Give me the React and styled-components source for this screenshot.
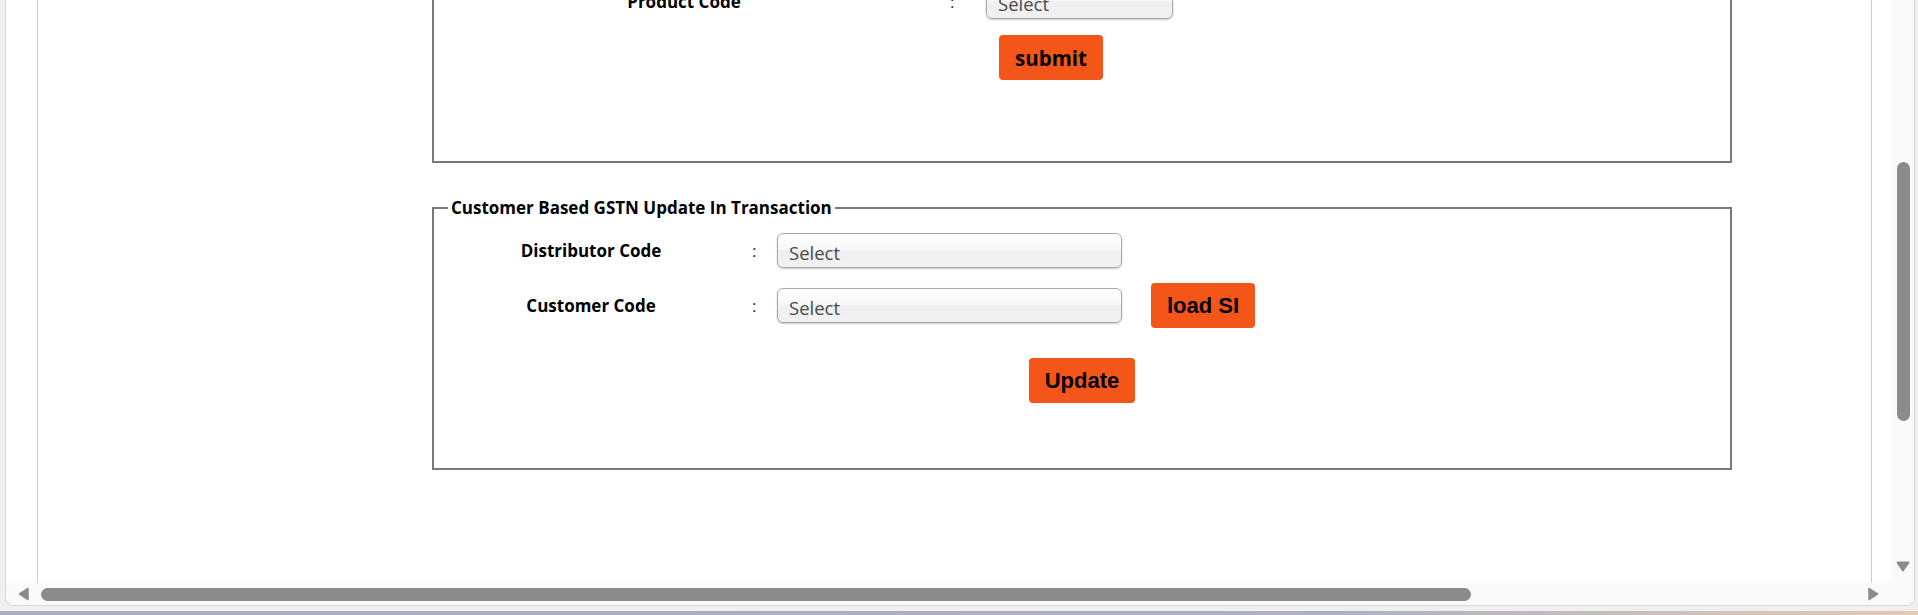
import React from 'react';
import styled, { createGlobalStyle } from 'styled-components';

const GlobalStyle = createGlobalStyle`
  html, body {
    margin: 0;
    padding: 0;
  }
  body {
    background: #f0f0f0;
    font-family: "Open Sans", "Liberation Sans", sans-serif;
    overflow: hidden;
  }
`;

const Screen = styled.div`
  width: 1918px;
  height: 615px;
  display: flex;
  flex-direction: column;
  overflow: hidden;
`;

const Window = styled.div`
  margin: 0 3px 0 5px;
  height: 606px;
  flex: none;
  box-sizing: border-box;
  display: grid;
  grid-template-columns: 1fr 22px;
  grid-template-rows: 583px 1fr;
  background: #fafafa;
  border: 1px solid #d8d8d8;
  border-top: none;
  border-radius: 0 0 8px 8px;
  overflow: hidden;
`;

const Desktop = styled.div`
  margin-top: auto;
  height: 4px;
  background: linear-gradient(90deg, #a8adc1 0%, #adb1c3 70%, #c9bfbd 85%, #e6c8b2 100%);
`;

const Viewport = styled.div`
  background: #fff;
  overflow: hidden;
`;

const Page = styled.div`
  margin-left: 31px;
  width: 1835px;
  height: 100%;
  box-sizing: border-box;
  border-left: 1px solid #cdcdcd;
  border-right: 1px solid #cdcdcd;
  display: flex;
  flex-direction: column;
`;

const Scrolled = styled.div`
  margin-top: -40px;
  display: flex;
  flex-direction: column;
`;

const Fieldset = styled.fieldset`
  margin: ${p => p.$spaceAbove}px 0 0 394px;
  width: 1300px;
  min-width: 0;
  box-sizing: border-box;
  border: 2px solid #787878;
  padding: ${p => p.$padTop}px 0 ${p => p.$padBottom}px;
`;

const Legend = styled.legend`
  margin-left: 14px;
  padding: 0 3px;
  font: 700 17px/23px "Open Sans", sans-serif;
  color: #000;
`;

const FormGrid = styled.div`
  display: grid;
  grid-template-columns: ${p => p.$label}px ${p => p.$colon}px ${p => p.$select}px auto;
  row-gap: ${p => p.$gap}px;
  align-items: center;
  margin-left: ${p => p.$indent}px;
`;

const Label = styled.div`
  text-align: center;
  font: 700 17px/23px "Open Sans", sans-serif;
  color: #000;
`;

const Colon = styled.div`
  padding-left: ${p => p.$pad}px;
  font: 400 17px/23px "Open Sans", sans-serif;
  color: #2b3440;
`;

const SelectBox = styled.div`
  height: 35px;
  box-sizing: border-box;
  padding: 6px 0 0 11px;
  border: 1px solid #a9a9a9;
  border-radius: 6px;
  background: linear-gradient(to bottom, #ffffff 0%, #f9f9f9 45%, #efefef 52%, #f1f1f1 100%);
  box-shadow: 0 1px 2px rgba(0, 0, 0, 0.22);
  font: 400 18.5px/25px "Open Sans", sans-serif;
  color: #4a4a4a;
`;

const ActionButton = styled.button`
  justify-self: start;
  height: 45px;
  margin-left: ${p => p.$offset || 0}px;
  padding: 0 16px;
  border: none;
  border-radius: 4px;
  background: #f4561a;
  color: #000;
  font-weight: 700;
  font-family: ${p => (p.$humanist ? '"Open Sans"' : '"Liberation Sans"')}, sans-serif;
  font-size: ${p => (p.$humanist ? '20.5px' : '22px')};
  cursor: pointer;
`;

const CenterRow = styled.div`
  display: flex;
  justify-content: center;
  margin-top: ${p => p.$gap}px;
`;

const VScroll = styled.div`
  display: flex;
  flex-direction: column;
  align-items: center;
  padding-top: 162px;
  padding-bottom: 11px;
  box-sizing: border-box;
  background: #fafafa;
`;

const VThumb = styled.div`
  width: 13px;
  height: 259px;
  border-radius: 7px;
  background: #8b8b8b;
`;

const HScroll = styled.div`
  display: flex;
  align-items: center;
  padding: 0 13px 0 12px;
  background: #fafafa;
`;

const HThumb = styled.div`
  width: 1430px;
  height: 13px;
  margin-left: 12px;
  border-radius: 7px;
  background: #8b8b8b;
`;

const Arrow = styled.svg`
  display: block;
  flex: none;
  margin-top: ${p => (p.$pushDown ? 'auto' : '0')};
  margin-left: ${p => (p.$pushRight ? 'auto' : '0')};
`;

const Corner = styled.div`
  background: #fafafa;
`;

function DownArrow() {
  return (
    <Arrow $pushDown width="14" height="11" viewBox="0 0 14 11">
      <polygon points="1.5,1.5 12.5,1.5 7,9.5" fill="#8b8b8b" stroke="#8b8b8b" strokeWidth="2" strokeLinejoin="round" />
    </Arrow>
  );
}

function SideArrow({ dir }) {
  const pts = dir === 'left' ? '10,1.5 10,12.5 1.5,7' : '1,1.5 1,12.5 9.5,7';
  return (
    <Arrow $pushRight={dir === 'right'} width="11" height="14" viewBox="0 0 11 14">
      <polygon points={pts} fill="#8b8b8b" stroke="#8b8b8b" strokeWidth="1.5" strokeLinejoin="round" />
    </Arrow>
  );
}

function FormRow({ label, colonPad }) {
  return (
    <>
      <Label>{label}</Label>
      <Colon $pad={colonPad}>:</Colon>
      <SelectBox>Select</SelectBox>
    </>
  );
}

export default function App() {
  return (
    <Screen>
      <GlobalStyle />
      <Window>
        <Viewport>
          <Page>
            <Scrolled>
              <Fieldset $spaceAbove={0} $padTop={22} $padBottom={81}>
                <FormGrid $indent={136} $label={228} $colon={188} $select={187} $gap={16}>
                  <FormRow label="Product Code" colonPad={152} />
                  <span />
                  <span />
                  <span />
                  <ActionButton $humanist $offset={13}>submit</ActionButton>
                </FormGrid>
              </Fieldset>

              <Fieldset $spaceAbove={33} $padTop={14} $padBottom={65}>
                <Legend>Customer Based GSTN Update In Transaction</Legend>
                <FormGrid $indent={60} $label={194} $colon={89} $select={345} $gap={15}>
                  <FormRow label="Distributor Code" colonPad={64} />
                  <span />
                  <FormRow label="Customer Code" colonPad={64} />
                  <ActionButton $offset={29}>load SI</ActionButton>
                </FormGrid>
                <CenterRow $gap={30}>
                  <ActionButton>Update</ActionButton>
                </CenterRow>
              </Fieldset>
            </Scrolled>
          </Page>
        </Viewport>
        <VScroll>
          <VThumb />
          <DownArrow />
        </VScroll>
        <HScroll>
          <SideArrow dir="left" />
          <HThumb />
          <SideArrow dir="right" />
        </HScroll>
        <Corner />
      </Window>
      <Desktop />
    </Screen>
  );
}
